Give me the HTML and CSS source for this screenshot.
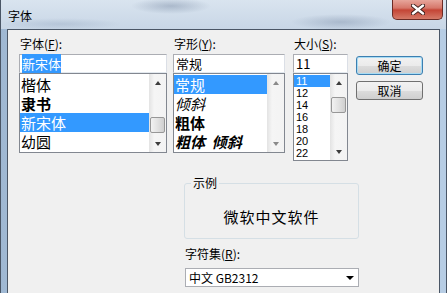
FILE: index.html
```
<!DOCTYPE html>
<html lang="zh-CN">
  <head>
    <meta charset="UTF-8" />
    <title>字体</title>
    <link rel="stylesheet" href="styles.css">
  </head>
  <body>
    <div class="window">
      <div class="titlebar">
        <span class="title">字体</span>
        <div class="close">
          <svg width="14" height="11" viewBox="0 0 14 11">
            <path d="M2 1.5 L12 9.5 M12 1.5 L2 9.5" stroke="#3a1d1a" stroke-width="4.2" stroke-linecap="round" />
            <path d="M2 1.5 L12 9.5 M12 1.5 L2 9.5" stroke="#fff" stroke-width="2.4" stroke-linecap="round" />
          </svg>
        </div>
      </div>

      <div class="client">
        <div class="top-row">
          <div class="col col-font">
            <div class="lbl">字体(<u>F</u>):</div>
            <div class="textbox"><span class="sel-text">新宋体</span></div>
            <div class="listbox">
              <ul class="items big">
                <li>楷体</li>
                <li class="heavy">隶书</li>
                <li class="selected">新宋体</li>
                <li>幼圆</li>
              </ul>
              <div class="scrollbar">
                <div class="sb-btn"><span class="arr up"></span></div>
                <div class="sb-track"><div class="sb-thumb thumb-font"></div></div>
                <div class="sb-btn"><span class="arr down"></span></div>
              </div>
            </div>
          </div>

          <div class="col col-style">
            <div class="lbl">字形(<u>Y</u>):</div>
            <div class="textbox">常规</div>
            <div class="listbox">
              <ul class="items big">
                <li class="selected">常规</li>
                <li class="ital">倾斜</li>
                <li class="bold">粗体</li>
                <li class="bold ital">粗体&nbsp;&nbsp;倾斜</li>
              </ul>
              <div class="scrollbar">
                <div class="sb-btn"><span class="arr up light"></span></div>
                <div class="sb-track"></div>
                <div class="sb-btn"><span class="arr down light"></span></div>
              </div>
            </div>
          </div>

          <div class="col col-size">
            <div class="lbl">大小(<u>S</u>):</div>
            <div class="textbox">11</div>
            <div class="listbox tall">
              <ul class="items small">
                <li class="selected">11</li>
                <li>12</li>
                <li>14</li>
                <li>16</li>
                <li>18</li>
                <li>20</li>
                <li>22</li>
              </ul>
              <div class="scrollbar">
                <div class="sb-btn"><span class="arr up"></span></div>
                <div class="sb-track"><div class="sb-thumb thumb-size"></div></div>
                <div class="sb-btn"><span class="arr down"></span></div>
              </div>
            </div>
          </div>

          <div class="buttons">
            <button class="btn default">确定</button>
            <button class="btn">取消</button>
          </div>
        </div>

        <div class="bottom">
          <fieldset class="sample">
            <legend>示例</legend>
            <div class="sample-text">微软中文软件</div>
          </fieldset>
          <div class="lbl">字符集(<u>R</u>):</div>
          <div class="combo">
            <span>中文 GB2312</span>
            <span class="arr down black"></span>
          </div>
        </div>
      </div>
    </div>
  </body>
</html>
```

FILE: styles.css
```
body {
  margin: 0;
  background-color: #fff;
  font-family: "Noto Sans CJK SC", "Liberation Sans", sans-serif;
  font-size: 12px;
  color: #000;
}
.window {
  width: 447px;
  height: 293px;
  box-sizing: border-box;
  border: 1px solid #4a5666;
  border-top: 0;
  border-bottom: 0;
  padding: 0 6px;
  background: linear-gradient(to right, #9fb8d3, #c3d8ee 40%, #b7cde4);
  overflow: hidden;
  position: relative;
}
.titlebar {
  height: 29px;
  margin: 0 -6px;
  padding: 0 6px;
  display: flex;
  align-items: center;
  background:
    radial-gradient(ellipse 40px 8px at 170px 6px, rgba(90, 110, 140, 0.35), transparent),
    radial-gradient(ellipse 50px 8px at 340px 22px, rgba(90, 110, 140, 0.3), transparent),
    radial-gradient(ellipse 60px 6px at 60px 24px, rgba(120, 140, 170, 0.25), transparent),
    linear-gradient(to bottom, #d9e4ef, #c8d6e6);
}
.title {
  font-size: 12px;
  margin-top: 2px;
  padding-left: 1px;
}
.close {
  position: absolute;
  top: -1px;
  right: 3px;
  width: 49px;
  height: 20px;
  border: 1px solid #6c2b25;
  border-top: 0;
  border-radius: 0 0 5px 5px;
  background: linear-gradient(to bottom, #e9aba1 0%, #d6776a 45%, #c44536 55%, #d57a68 100%);
  display: flex;
  justify-content: center;
  align-items: center;
}
.client {
  background-color: #f0f0f0;
  border: 1px solid #4a5666;
  border-bottom: 0;
  height: 264px;
  box-sizing: border-box;
  padding: 6px 0 0 11px;
}
.top-row {
  display: flex;
  align-items: flex-start;
}
.col-font {
  width: 148px;
  margin-right: 6px;
}
.col-style {
  width: 112px;
  margin-right: 8px;
}
.col-size {
  width: 55px;
  margin-right: 8px;
}
.lbl {
  height: 18px;
  line-height: 16px;
  padding-left: 1px;
  white-space: nowrap;
}
.textbox {
  height: 19px;
  box-sizing: border-box;
  background-color: #fff;
  border: 1px solid #abadb3;
  border-right-color: #dbdfe6;
  border-bottom-color: #e3e9ef;
  padding: 0 2px;
  line-height: 17px;
  font-size: 13px;
}
.sel-text {
  background-color: #3399ff;
  color: #fff;
}
.listbox {
  height: 80px;
  box-sizing: border-box;
  border: 1px solid #828790;
  background-color: #fff;
  display: flex;
  overflow: hidden;
}
.listbox.tall {
  height: 88px;
}
.items {
  list-style: none;
  margin: 0;
  padding: 1px 0 0 0;
  flex: 1;
}
.items.big li {
  height: 19px;
  line-height: 19px;
  font-size: 15px;
  padding-left: 1px;
}
.items.small li {
  height: 12px;
  line-height: 12px;
  font-family: "Liberation Sans", sans-serif;
  font-size: 11px;
  padding-left: 2px;
}
.items li.selected {
  background-color: #3399ff;
  color: #fff;
}
.heavy {
  font-weight: bold;
}
.ital {
  font-style: italic;
}
.bold {
  font-weight: bold;
}
.scrollbar {
  width: 17px;
  display: flex;
  flex-direction: column;
  background: linear-gradient(to right, #e3e3e3, #f5f5f5 30%, #f3f3f3);
}
.sb-btn {
  height: 17px;
  display: flex;
  justify-content: center;
  align-items: center;
}
.sb-track {
  flex: 1;
}
.sb-thumb {
  margin: 0 1px;
  height: 16px;
  box-sizing: border-box;
  border: 1px solid #979797;
  border-radius: 2px;
  background: linear-gradient(to right, #f2f2f2, #e2e2e2 50%, #cfcfcf);
}
.thumb-font {
  margin-top: 26px;
}
.thumb-size {
  margin-top: 6px;
}
.arr {
  width: 0;
  height: 0;
  border-left: 3px solid transparent;
  border-right: 3px solid transparent;
}
.arr.up {
  border-bottom: 4px solid #3d3d3d;
}
.arr.down {
  border-top: 4px solid #3d3d3d;
}
.arr.up.light {
  border-bottom-color: #8a8a8a;
}
.arr.down.light {
  border-top-color: #8a8a8a;
}
.buttons {
  width: 67px;
  padding-top: 20px;
  display: flex;
  flex-direction: column;
  gap: 6px;
}
.btn {
  height: 19px;
  padding: 0;
  border: 1px solid #707070;
  border-radius: 3px;
  background: linear-gradient(to bottom, #f2f2f2 0%, #ebebeb 50%, #dddddd 51%, #cfcfcf 100%);
  font-family: "Noto Sans CJK SC", sans-serif;
  font-size: 12px;
  line-height: 16px;
  color: #000;
}
.btn.default {
  border-color: #3c7fb1;
  box-shadow: inset 0 0 0 1px #a8dcf4;
}
.bottom {
  margin-left: 165px;
  width: 175px;
  padding-top: 15px;
}
.sample {
  margin: 0;
  height: 63px;
  box-sizing: border-box;
  border: 1px solid #d5dfe5;
  border-radius: 3px;
  padding: 0;
}
.sample legend {
  margin-left: 6px;
  padding: 0 2px;
  line-height: 14px;
}
.sample-text {
  text-align: center;
  font-size: 15px;
  letter-spacing: 1px;
  margin-top: 16px;
}
.bottom .lbl {
  margin-top: 7px;
  height: 22px;
}
.combo {
  margin-left: 1px;
  height: 19px;
  box-sizing: border-box;
  border: 1px solid #abadb3;
  background-color: #fff;
  display: flex;
  justify-content: space-between;
  align-items: center;
  padding: 0 4px 0 3px;
}
.arr.down.black {
  border-left-width: 4px;
  border-right-width: 4px;
  border-top: 4px solid #000;
}
```
